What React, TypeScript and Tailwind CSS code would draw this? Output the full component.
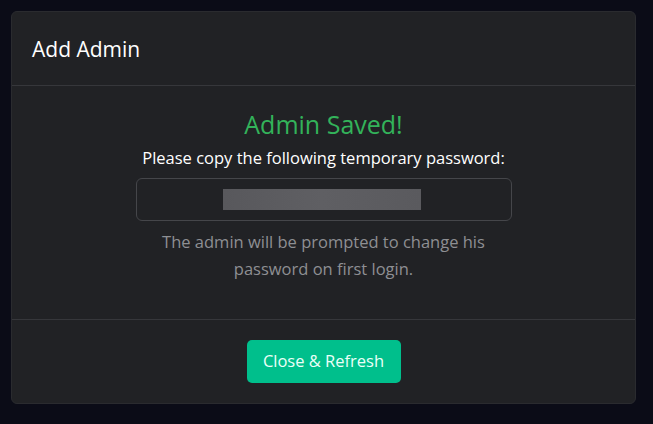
export default function App() {
  return (
    <main
      className="min-h-screen bg-[#0b0c17] pt-[11px] pl-[11px]"
      style={{ fontFamily: '"Open Sans", "Noto Sans", sans-serif' }}
    >
      <div className="w-[625px] rounded-[6px] border border-[#2a2b2f] bg-[#212225] text-white">
        {/* Header */}
        <div className="flex h-[74px] items-center border-b border-[#36373b] px-[20px]">
          <h2 className="text-[21px] leading-[28px]">Add Admin</h2>
        </div>

        {/* Body */}
        <div className="flex flex-col items-center pt-[24px] pb-[37px]">
          <h3 className="text-[25px] leading-[29px] text-[#33b35a]">Admin Saved!</h3>
          <p className="mt-[7px] text-[16.5px] leading-[24px]">
            Please copy the following temporary password:
          </p>
          <div className="mt-[8px] flex h-[43px] w-[376px] items-center justify-center rounded-[6px] border border-[#45464a] bg-[#212225]">
            <div className="mr-[4px] h-[21px] w-[198px] bg-gradient-to-r from-[#58585c] via-[#5f5f63] to-[#5a5a5e] blur-[0.6px]" />
          </div>
          <p className="mt-[7px] w-[376px] text-center text-[16.5px] leading-[27px] text-[#8e8f93]">
            The admin will be prompted to change his password on first login.
          </p>
        </div>

        {/* Footer */}
        <div className="flex justify-center border-t border-[#36373b] pt-[20px] pb-[20px]">
          <button className="h-[43px] w-[154px] rounded-[5px] bg-[#00bf8c] text-[16.5px] text-[#eafff8]">
            Close &amp; Refresh
          </button>
        </div>
      </div>
    </main>
  );
}
